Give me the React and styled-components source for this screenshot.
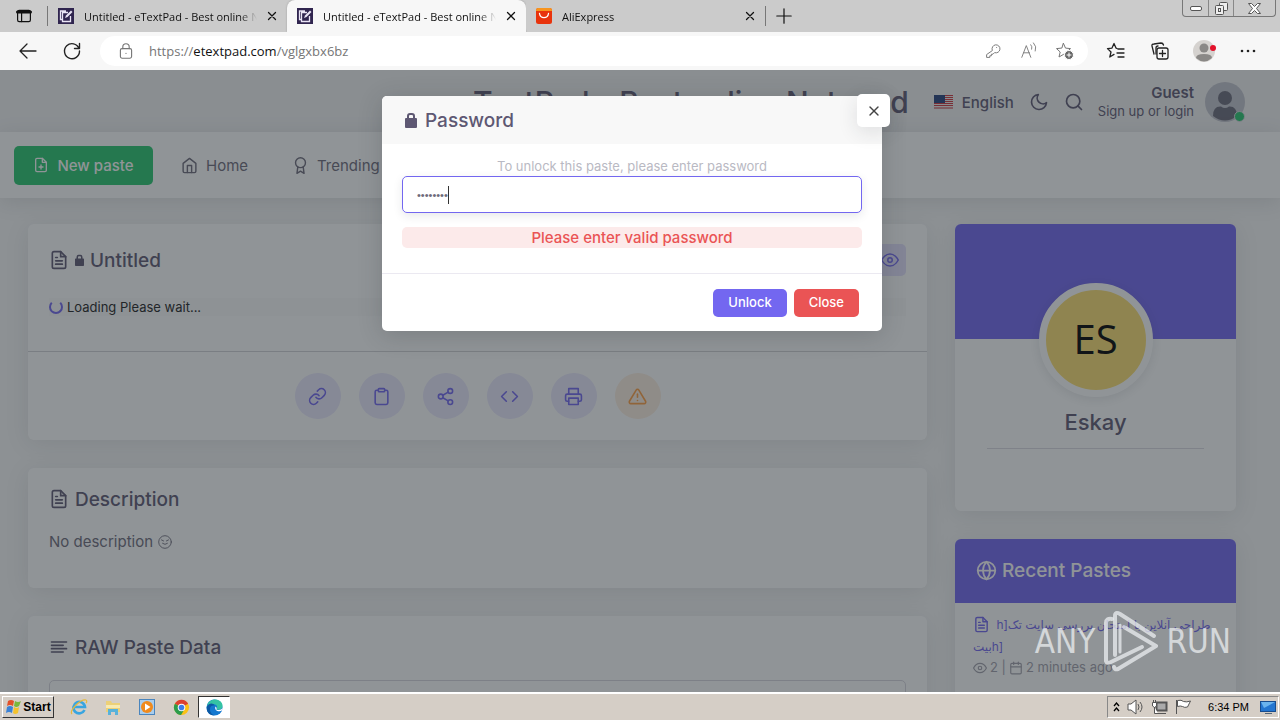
import React from "react";
import styled, { createGlobalStyle, css } from "styled-components";
import {
  FiAlertTriangle, FiAlignLeft, FiAward, FiCalendar, FiClipboard, FiCode, FiEye,
  FiFilePlus, FiFileText, FiGlobe, FiHome, FiLink, FiMoon, FiPrinter, FiSearch, FiShare2, FiX,
} from "react-icons/fi";

const ui = `"Open Sans", "Noto Sans", sans-serif`;
const brand = `Inter, "Noto Sans", "DejaVu Sans", sans-serif`;

const Global = createGlobalStyle`
  *, *::before, *::after { box-sizing: border-box; }
  body { margin: 0; font-family: ${brand}; color: #6e6b7b; }
  button, input, textarea { font: inherit; color: inherit; }
  button { border: 0; padding: 0; background: none; display: inline-flex; align-items: center; justify-content: center; }
  a { color: inherit; text-decoration: none; }
  h1, h2, h3, p { margin: 0; font-weight: 500; }
  svg { display: block; flex: none; }
`;

const Screen = styled.div`
  display: flex;
  flex-direction: column;
  height: 100vh;
  overflow: hidden;
`;

/* browser chrome */
const TabBar = styled.div`
  display: flex;
  flex: 0 0 32px;
  align-items: stretch;
  background: #cbcbcb;
  font: 11px ${ui};
  color: #111;
`;
const TabActions = styled.button`
  width: 47px;
`;
const Tab = styled.div`
  display: flex;
  flex: 0 1 239px;
  min-width: 0;
  align-items: center;
  gap: 10px;
  padding: 0 10px;
  border-radius: ${p => (p.$active ? "8px 8px 0 0" : "0 0 4px 4px")};
  background: ${p => (p.$active ? "#f7f7f7" : "#cbcbcb")};
  box-shadow: ${p => (p.$active ? "0 0 2px #999" : "none")};
`;
const TabLabel = styled.span`
  flex: 1 1 0;
  min-width: 0;
  overflow: hidden;
  white-space: nowrap;
  mask-image: linear-gradient(to right, #000 90%, transparent);
`;
const Separator = styled.i`
  align-self: center;
  width: 1px;
  height: 20px;
  background: #777;
`;
const NewTab = styled.button`
  width: 36px;
`;
const WindowButtons = styled.div`
  display: flex;
  align-self: flex-start;
  height: 17px;
  margin-left: auto;
  margin-right: 4px;
  border: 1px solid #777;
  border-top: 0;
  border-radius: 0 0 4px 4px;
`;
const WindowButton = styled.button`
  width: ${p => (p.$wide ? 42 : 25)}px;
  & + & { border-left: 1px solid #888; }
`;
const Toolbar = styled.div`
  display: flex;
  flex: 0 0 38px;
  align-items: center;
  padding: 0 22px 0 18px;
  background: #f7f7f7;
  color: #222;
`;
const ToolGroup = styled.div`
  display: flex;
  gap: 24px;
`;
const Tool = styled.button`
  width: 20px;
  height: 24px;
`;
const Address = styled.div`
  display: flex;
  flex: 1;
  align-items: center;
  height: 30px;
  margin: 0 18px;
  padding: 0 13px 0 18px;
  border-radius: 15px;
  background: #fff;
  color: #767676;
  font: 13px ${ui};
`;
const Url = styled.a`
  flex: 1;
  margin-left: 15px;
  b { font-weight: 400; color: #111; }
`;
const AddressTools = styled.div`
  display: flex;
  gap: 16px;
`;

/* page */
const Viewport = styled.main`
  position: relative;
  flex: 1;
  min-height: 0;
  overflow: hidden;
  background: #f8f8f8;
`;
const Header = styled.header`
  display: flex;
  align-items: center;
  justify-content: flex-end;
  height: 62px;
  padding: 2px 35px 0 0;
  background: #f2f2f3;
  color: #5e5873;
`;
const SiteTitle = styled.h1`
  margin-right: 25px;
  font-size: 30px;
  line-height: 36px;
  white-space: nowrap;
`;
const Language = styled.button`
  gap: 9px;
  font-size: 15px;
  font-weight: 500;
`;
const HeaderIcon = styled.button`
  margin-left: 15px;
`;
const Account = styled.a`
  display: flex;
  align-items: center;
  gap: 11px;
  margin-left: 14px;
  text-align: right;
  font-size: 13px;
  line-height: 18px;
  strong { display: block; font-size: 15px; font-weight: 600; }
`;
const Nav = styled.nav`
  position: relative;
  display: flex;
  align-items: center;
  height: 66px;
  padding: 0 14px;
  background: #fff;
  box-shadow: 0 4px 20px rgba(34, 41, 47, 0.12);
`;
const NewPaste = styled.button`
  gap: 8px;
  width: 139px;
  height: 39px;
  margin-right: 28px;
  border-radius: 5px;
  background: #28c76f;
  color: #fff;
  font-size: 15px;
  font-weight: 500;
`;
const NavLink = styled.a`
  display: flex;
  align-items: center;
  gap: 8px;
  margin-right: 44px;
  font-size: 15px;
`;
const Content = styled.div`
  display: flex;
  gap: 28px;
  padding: 26px 44px 0 28px;
`;
const Column = styled.div`
  display: flex;
  flex: ${p => (p.$side ? "0 0 281px" : "1")};
  flex-direction: column;
  gap: 28px;
  min-width: 0;
`;
const Card = styled.section`
  border-radius: 6px;
  background: #fff;
  box-shadow: 0 4px 24px rgba(34, 41, 47, 0.1);
`;
const CardBody = styled.div`
  padding: 20px 21px;
  min-height: ${p => p.$min || 0}px;
`;
const CardTitle = styled.h2`
  display: flex;
  align-items: center;
  gap: 6px;
  height: ${p => (p.$tall ? 32 : 22)}px;
  color: #5e5873;
  font-size: 19px;
`;
const ViewButton = styled.button`
  width: 32px;
  height: 32px;
  margin-left: auto;
  border-radius: 5px;
  background: #e4e1fc;
  color: #7367f0;
`;
const Loading = styled.p`
  display: flex;
  align-items: center;
  gap: 4px;
  height: 18px;
  margin-top: 22px;
  background: #fbfbfb;
  color: #222;
  font-size: 13px;
  font-weight: 400;
`;
const Spinner = styled.i`
  width: 14px;
  height: 14px;
  border: 2px solid #7367f0;
  border-top-color: transparent;
  border-radius: 50%;
`;
const Actions = styled.div`
  display: flex;
  justify-content: center;
  gap: 18px;
  padding: 21px 0;
  border-top: 1px solid #d2d2d6;
`;
const RoundAction = styled.button`
  width: 46px;
  height: 46px;
  border-radius: 50%;
  background: ${p => (p.$warn ? "#fdeee0" : "#eae8fd")};
  color: ${p => (p.$warn ? "#ff9f43" : "#7367f0")};
`;
const Note = styled.p`
  display: flex;
  align-items: center;
  gap: 5px;
  margin-top: 22px;
  font-size: 15px;
  font-weight: 400;
  line-height: 20px;
`;
const RawData = styled.textarea`
  display: block;
  width: 100%;
  height: 200px;
  margin-top: 22px;
  border: 1px solid #d8d6de;
  border-radius: 5px;
  background: transparent;
  resize: none;
`;
const Cover = styled.div`
  height: 115px;
  border-radius: 6px 6px 0 0;
  background: #7367f0;
`;
const Profile = styled(Card)`
  display: flex;
  flex-direction: column;
  min-height: 287px;
`;
const Initials = styled.div`
  display: grid;
  place-items: center;
  align-self: center;
  width: 114px;
  height: 114px;
  margin-top: -56px;
  padding-bottom: 4px;
  border: 7px solid #fff;
  border-radius: 50%;
  background: #fcdf71;
  box-shadow: 0 2px 12px rgba(34, 41, 47, 0.12);
  color: #000;
  font: 40px ${ui};
`;
const ProfileName = styled.h3`
  margin: 10px 32px 0;
  padding-bottom: 11px;
  border-bottom: 1px solid #dcdbe2;
  color: #5e5873;
  font-size: 22px;
  line-height: 30px;
  text-align: center;
`;
const RecentHeader = styled.h2`
  display: flex;
  align-items: center;
  gap: 5px;
  height: 64px;
  padding: 0 21px 2px;
  border-radius: 6px 6px 0 0;
  background: #7367f0;
  color: #fff;
  font-size: 19px;
`;
const RecentItem = styled.div`
  padding: 10px 18px 40px;
  line-height: 21px;
`;
const PasteLink = styled.a`
  color: #7367f0;
  font-size: 12px;
  svg { display: inline-block; margin-right: 3px; vertical-align: -4px; }
`;
const Meta = styled.p`
  display: flex;
  align-items: center;
  gap: 3px;
  color: #a3a1ac;
  font-size: 13px;
  font-weight: 400;
`;

/* password dialog */
const Backdrop = styled.div`
  position: absolute;
  inset: 0;
  display: flex;
  align-items: flex-start;
  justify-content: center;
  padding: 26px 16px 0 0;
  background: rgba(34, 41, 47, 0.5);
`;
const Dialog = styled.form`
  position: relative;
  width: 500px;
  border-radius: 5px;
  background: #fff;
  box-shadow: 0 4px 24px rgba(34, 41, 47, 0.2);
`;
const DialogTitle = styled.h2`
  display: flex;
  align-items: center;
  gap: 8px;
  height: 48px;
  padding: 0 23px;
  border-radius: 5px 5px 0 0;
  background: #f8f8f8;
  color: #5e5873;
  font-size: 19px;
`;
const DialogClose = styled.button`
  position: absolute;
  top: -2px;
  right: -8px;
  width: 33px;
  height: 33px;
  border-radius: 5px;
  background: #fff;
  box-shadow: 0 5px 20px rgba(34, 41, 47, 0.12);
  color: #444;
`;
const DialogBody = styled.div`
  padding: 12px 20px 25px;
  text-align: center;
`;
const Hint = styled.label`
  display: block;
  color: #b9b9c3;
  font-size: 13px;
  line-height: 20px;
`;
const Field = styled.div`
  display: flex;
  align-items: center;
  height: 37px;
  padding: 0 14px;
  border: 1px solid #7367f0;
  border-radius: 5px;
  box-shadow: 0 3px 10px rgba(34, 41, 47, 0.1);
`;
const Secret = styled.input`
  field-sizing: content;
  padding: 0;
  border: 0;
  outline: 0;
  background: none;
  font: 11px "Liberation Sans", sans-serif;
`;
const Caret = styled.i`
  width: 1px;
  height: 18px;
  background: #333;
`;
const ErrorText = styled.p`
  margin-top: 14px;
  border-radius: 5px;
  background: #fceaea;
  color: #ea5455;
  font-size: 15px;
  line-height: 21px;
`;
const DialogFooter = styled.div`
  display: flex;
  justify-content: flex-end;
  gap: 7px;
  padding: 15px 23px 14px;
  border-top: 1px solid #ebe9f1;
`;
const DialogButton = styled.button`
  height: 28px;
  padding: 0 15px 2px;
  border-radius: 5px;
  background: ${p => (p.$danger ? "#ea5455" : "#7367f0")};
  color: #fff;
  font-size: 13px;
  font-weight: 500;
`;
const Watermark = styled.div`
  position: absolute;
  right: 49px;
  bottom: 20px;
  display: flex;
  align-items: center;
  gap: 8px;
  color: rgba(235, 238, 240, 0.75);
  font: 33px "Liberation Sans Narrow", "DejaVu Sans Condensed", sans-serif;
`;

/* desktop taskbar */
const Taskbar = styled.footer`
  display: flex;
  flex: 0 0 28px;
  align-items: center;
  padding-left: 2px;
  border-top: 2px solid #fff;
  background: #d5cec6;
  color: #000;
  font: 11px "Liberation Sans", sans-serif;
`;
const bevel = css`
  border: 1px solid;
  border-color: ${p => (p.$pressed ? "#333 #fff #fff #333" : "#fff #333 #333 #fff")};
`;
const Start = styled.button`
  ${bevel}
  gap: 1px;
  width: 52px;
  height: 22px;
  margin-right: 8px;
  font-size: 12px;
  font-weight: 700;
`;
const TaskButton = styled.button`
  width: 34px;
  height: 22px;
  ${p => p.$pressed && css`${bevel} width: 32px; background: #fff;`}
`;
const Tray = styled.div`
  display: flex;
  align-items: center;
  gap: 7px;
  height: 22px;
  margin-left: auto;
  margin-right: 1px;
  padding: 0 2px 0 5px;
  border: 1px solid;
  border-color: #888 #fff #fff #888;
  time { margin: 0 4px 0 9px; }
`;

const Lines = ({ size = 20, w = 1, children, ...rest }) => (
  <svg width={size} height={size} viewBox="0 0 20 20" fill="none" stroke="currentColor" strokeWidth={w} strokeLinecap="round" strokeLinejoin="round" {...rest}>{children}</svg>
);
const Cross = () => <Lines size={10} w={2.5}><path d="M3 3l14 14M17 3L3 17" /></Lines>;
const Lock = ({ size }) => (
  <svg width={size * 0.75} height={size} viewBox="0 0 12 16" fill="currentColor"><path d="M2 6V4a3 3 0 0 1 3-3h2a3 3 0 0 1 3 3v2h1q1 0 1 1v8q0 1-1 1H1q-1 0-1-1V7q0-1 1-1zm2 0h4V4a1.200 1.200 0 0 0-1-1H5a1.200 1.200 0 0 0-1 1z" /></svg>
);
const PadIcon = () => (
  <svg width="16" height="16" viewBox="0 0 16 16" fill="none" stroke="#e9e4f5">
    <path d="M0 0h16v16H0z" fill="#30254f" stroke="none" />
    <path d="M8 3H2.500v8.500H5M10 4.500H4.500v9h8V8" strokeWidth="1.300" />
    <path d="M7 10l1-2.500 5-5 1.500 1.500-5 5z" fill="#e9e4f5" stroke="none" />
  </svg>
);
const AliIcon = () => (
  <svg width="16" height="16" viewBox="0 0 16 16"><rect width="16" height="16" rx="2.500" fill="#e8330c" /><path d="M0 3V2q0-2 2-2h12q2 0 2 2v1z" fill="#f7941e" /><path d="M3.500 5.500c.8 5.500 8.200 5.500 9 0" fill="none" stroke="#fff" strokeWidth="1.300" strokeLinecap="round" /></svg>
);
const Star = "M8.500 2.500l2 4.600 5 .5-3.800 3.400 1.200 5-4.400-2.600L4 16l1.200-5-3.700-3.400 5-.5z";

const Flag = () => (
  <svg width="19" height="14" viewBox="0 0 19 14">
    <path d="M0 0h19v14H0z" fill="#eee" />
    <path d="M0 .5h19M0 2.500h19M0 4.500h19M0 6.500h19M0 8.500h19M0 10.500h19M0 13h19" stroke="#d0343d" />
    <path d="M0 0h11v8H0z" fill="#26407c" />
  </svg>
);
const GuestAvatar = () => (
  <svg width="40" height="40" viewBox="0 0 40 40">
    <circle cx="20" cy="20" r="20" fill="#c3c4ce" />
    <circle cx="20" cy="16" r="7" fill="#6b6a7a" />
    <path d="M8 34q0-10 8-9.500 4 3 8 0Q32 24 32 34q-12 9-24 0z" fill="#6b6a7a" />
    <circle cx="34.500" cy="34.500" r="5" fill="#28c76f" stroke="#dcdce2" />
  </svg>
);
const Face = () => (
  <Lines size={14} w={1.3}><circle cx="10" cy="10" r="9" /><path d="M5 7l3 1.500M15 7l-3 1.500M6.500 12q3.500 3 7 0" /></Lines>
);
const PlayMark = () => (
  <svg width="55" height="62" viewBox="0 0 55 62" fill="none" stroke="currentColor" strokeWidth="4" strokeLinejoin="round" strokeLinecap="round">
    <path d="M12 45V6q0-5 5-2l34 22" />
    <path d="M21 17l32 19-38 23q-3 1-4-2" />
    <path d="M9 9Q3 8 3 13v38q1 3 5 1l31-15" />
    <path d="M17 15v27" strokeWidth="3" />
  </svg>
);

const WinFlag = () => (
  <svg width="17" height="16" viewBox="0 0 17 16">
    <path d="M3 2q3-2 6 0L8 7Q5 5 2 7z" fill="#e2512a" /><path d="M10 2q3 2 6 0l-2 5q-3 2-5 0z" fill="#79b83c" />
    <path d="M2 8q3-2 6 0l-1 6q-3-2-6 0z" fill="#3b82d6" /><path d="M9 8q3 2 5 0l-1 6q-3 2-5 0z" fill="#f4c22c" />
  </svg>
);
const IeIcon = () => (
  <svg width="18" height="18" viewBox="0 0 18 18" fill="none"><path d="M14.500 12A5.800 5.800 0 1 1 15 9H4" stroke="#38a5e0" strokeWidth="2.600" /><path d="M2 16c-3-3 8-15 14-14 1 0 1 2 0 3" stroke="#e6b93a" strokeWidth="1.200" /></svg>
);
const FolderIcon = () => (
  <svg width="18" height="18" viewBox="0 0 18 18"><path d="M2 3h5l1 2h8v9H2z" fill="#ecd078" /><path d="M2 7h14v3H2z" fill="#f8eab0" /><path d="M4 17v-6h10v6h-3v-3H7v3z" fill="#58b2da" /></svg>
);
const MediaIcon = () => (
  <svg width="17" height="17" viewBox="0 0 17 17"><rect x=".5" y=".5" width="15" height="15" fill="#a9cdec" stroke="#4a85bd" /><circle cx="8" cy="8" r="6" fill="#f08a1c" /><path d="M6 4.500l5.500 3.500L6 11.500z" fill="#fff" /></svg>
);
const ChromeIcon = () => (
  <svg width="17" height="17" viewBox="0 0 18 18"><circle cx="9" cy="9" r="8" fill="#fbc116" /><path d="M9 9L2 5a8 8 0 0 1 14 0z" fill="#dd4131" /><path d="M9 9L2 5a8 8 0 0 0 6.500 12L12 11z" fill="#2c9c4b" /><circle cx="9" cy="9" r="4" fill="#fff" /><circle cx="9" cy="9" r="3" fill="#3f7de8" /></svg>
);
const EdgeIcon = () => (
  <svg width="17" height="17" viewBox="0 0 18 18"><circle cx="9" cy="9" r="8.500" fill="#1478cf" /><path d="M1 8C2 2 7 .5 10 .6c5 .2 8 4 7.500 7.400-.5 3-4 4-6.500 3 1.500-2 1-5-2.500-5.500C4 5 1.500 7 1 8z" fill="#35c3a4" /><path d="M10 8c-1 3 1 5 4 5q2 0 3-1l.5-3c-1 3-5 3-6.500 2 .6-1 .4-2-1-3z" fill="#fff" /><path d="M1 8c2-4 7-4 8-1-4-1-6 3-4 7q1 3 4 3.500C3 17.500 0 13 1 8z" fill="#0c59a4" /></svg>
);

const tabs = [
  { title: "Untitled - eTextPad - Best online Notepad", icon: PadIcon },
  { title: "Untitled - eTextPad - Best online Notepad", icon: PadIcon, active: true },
  { title: "AliExpress", icon: AliIcon },
];
const actions = [
  ["Copy link", FiLink], ["Copy text", FiClipboard], ["Share", FiShare2],
  ["Embed", FiCode], ["Print", FiPrinter], ["Report", FiAlertTriangle],
];
const launchers = [["Internet Explorer", IeIcon], ["Explorer", FolderIcon], ["Media Player", MediaIcon], ["Chrome", ChromeIcon], ["Edge", EdgeIcon]];

function Browser() {
  return (
    <>
      <TabBar>
        <TabActions aria-label="Tab actions">
          <Lines size={16} w={1.5}><rect x="2" y="3" width="16" height="14" rx="2" /><path d="M2 5h16" strokeWidth="4" /><path d="M7 6v11" /></Lines>
        </TabActions>
        <Separator />
        {tabs.map(({ title, icon: Icon, active }, i) => (
          <Tab key={i} $active={active}>
            <Icon />
            <TabLabel>{title}</TabLabel>
            <button aria-label="Close tab"><Cross /></button>
          </Tab>
        ))}
        <Separator />
        <NewTab aria-label="New tab"><Lines size={16} w={1.5}><path d="M10 1v18M1 10h18" /></Lines></NewTab>
        <WindowButtons>
          <WindowButton aria-label="Minimize"><svg width="12" height="5"><rect x=".5" y=".5" width="11" height="4" rx="1.500" fill="#fff" stroke="#555" /></svg></WindowButton>
          <WindowButton aria-label="Restore"><svg width="13" height="13" fill="#eee" stroke="#555"><rect x="4.500" y=".5" width="8" height="8" rx="1" /><rect x=".5" y="3.500" width="8" height="9" rx="1" /><rect x="3.500" y="6.500" width="2" height="3" /></svg></WindowButton>
          <WindowButton $wide aria-label="Close window"><svg width="13" height="11" viewBox="0 0 13 11"><path d="M.5.5h3l3 3 3-3h3L8.500 5.500l4 5h-3l-3-3-3 3h-3l4-5z" fill="#fff" stroke="#555" /></svg></WindowButton>
        </WindowButtons>
      </TabBar>
      <Toolbar>
        <ToolGroup>
          <Tool aria-label="Back"><Lines w={1.3}><path d="M18 10H2M9 3L2 10l7 7" /></Lines></Tool>
          <Tool aria-label="Reload"><Lines w={1.4}><path d="M17 7.500A7.500 7.500 0 1 0 17.500 10M17.500 2.500v5h-5" /></Lines></Tool>
        </ToolGroup>
        <Address>
          <Lines size={16} w={1.4}><rect x="3" y="7" width="14" height="12" rx="2" /><path d="M6 7V5a4 4 0 0 1 8 0v2M10 13v.2" /></Lines>
          <Url href="#url">https://<b>etextpad.com</b>/vglgxbx6bz</Url>
          <AddressTools>
            <Tool aria-label="Saved passwords"><Lines size={16} w={1.2}><path d="M9 9a5 5 0 1 1 3 3l-2 2H8v2H6v2H2v-3zM14.500 5.500v.1" /></Lines></Tool>
            <Tool aria-label="Read aloud"><Lines size={18}><path d="M2 17L7 4l5 13M4 12h6.500M12 3q2 2 1 5M15 1q4 4 2 9" /></Lines></Tool>
            <Tool aria-label="Add to favorites"><Lines size={20}><path d={Star} /><circle cx="14" cy="14" r="4.500" fill="#666" stroke="#fff" /><path d="M14 12v4M12 14h4" stroke="#fff" /></Lines></Tool>
          </AddressTools>
        </Address>
        <ToolGroup>
          <Tool aria-label="Favorites"><Lines w={1.3}><path d="M11 7.500l-1-.4-2-4.600-2 4.600-4.500.5 3.500 3.400-1.200 5L8 13.400M12 8h6M11 12h7M12 16h6" /></Lines></Tool>
          <Tool aria-label="Collections"><Lines w={1.3}><path d="M4 13l-2-8q-.5-2 2-2l7-1q2 0 2.500 2" /><path d="M6 13V7q0-2 2-2" /><rect x="7" y="7" width="11" height="11" rx="2" /><path d="M12.500 9.500v6M9.500 12.500h6" /></Lines></Tool>
          <Tool aria-label="Profile"><svg width="24" height="24" viewBox="0 0 24 24"><circle cx="12" cy="12" r="11" fill="#d5d2cf" /><circle cx="12" cy="9" r="4.500" fill="#8a8886" /><path d="M4 19q0-4 8-4t8 4q-8 7-16 0z" fill="#8a8886" /><circle cx="21" cy="9" r="3" fill="#e3122b" /></svg></Tool>
          <Tool aria-label="Settings"><svg width="16" height="4" fill="currentColor"><circle cx="2" cy="2" r="1.300" /><circle cx="8" cy="2" r="1.300" /><circle cx="14" cy="2" r="1.300" /></svg></Tool>
        </ToolGroup>
      </Toolbar>
    </>
  );
}

function PasswordDialog() {
  return (
    <Backdrop>
      <Dialog role="dialog" aria-label="Password" onSubmit={e => e.preventDefault()}>
        <DialogTitle><Lock size={16} />Password</DialogTitle>
        <DialogClose type="button" aria-label="Dismiss"><FiX size={16} /></DialogClose>
        <DialogBody>
          <Hint htmlFor="secret">To unlock this paste, please enter password</Hint>
          <Field>
            <Secret id="secret" type="password" defaultValue="password" />
            <Caret />
          </Field>
          <ErrorText role="alert">Please enter valid password</ErrorText>
        </DialogBody>
        <DialogFooter>
          <DialogButton>Unlock</DialogButton>
          <DialogButton type="button" $danger>Close</DialogButton>
        </DialogFooter>
      </Dialog>
    </Backdrop>
  );
}

export default function App() {
  return (
    <Screen>
      <Global />
      <Browser />
      <Viewport>
        <Header>
          <SiteTitle>eTextPad - Best online Notepad</SiteTitle>
          <Language><Flag />English</Language>
          <HeaderIcon aria-label="Dark mode"><FiMoon size={20} /></HeaderIcon>
          <HeaderIcon aria-label="Search"><FiSearch size={20} /></HeaderIcon>
          <Account href="#login"><span><strong>Guest</strong>Sign up or login</span><GuestAvatar /></Account>
        </Header>
        <Nav>
          <NewPaste><FiFilePlus size={16} />New paste</NewPaste>
          <NavLink href="#home"><FiHome size={17} />Home</NavLink>
          <NavLink href="#trending"><FiAward size={17} />Trending</NavLink>
        </Nav>
        <Content>
          <Column>
            <Card>
              <CardBody $min={127}>
                <CardTitle $tall><FiFileText size={20} /><Lock size={12} />Untitled<ViewButton aria-label="View"><FiEye size={18} /></ViewButton></CardTitle>
                <Loading><Spinner />Loading Please wait...</Loading>
              </CardBody>
              <Actions>
                {actions.map(([name, Icon]) => (
                  <RoundAction key={name} aria-label={name} $warn={name === "Report"}><Icon size={19} /></RoundAction>
                ))}
              </Actions>
            </Card>
            <Card>
              <CardBody $min={120}>
                <CardTitle><FiFileText size={20} />Description</CardTitle>
                <Note>No description <Face /></Note>
              </CardBody>
            </Card>
            <Card>
              <CardBody>
                <CardTitle><FiAlignLeft size={20} />RAW Paste Data</CardTitle>
                <RawData aria-label="Raw paste data" />
              </CardBody>
            </Card>
          </Column>
          <Column $side>
            <Profile>
              <Cover />
              <Initials>ES</Initials>
              <ProfileName>Eskay</ProfileName>
            </Profile>
            <Card>
              <RecentHeader><FiGlobe size={21} />Recent Pastes</RecentHeader>
              <RecentItem>
                <PasteLink href="#paste"><FiFileText size={17} /> h]طراحی آنلاین با امتحان بررسی سایت تک<br />بیتh]</PasteLink>
                <Meta><FiEye size={14} />2 | <FiCalendar size={14} />2 minutes ago</Meta>
              </RecentItem>
            </Card>
          </Column>
        </Content>
        <PasswordDialog />
        <Watermark>ANY<PlayMark />RUN</Watermark>
      </Viewport>
      <Taskbar>
        <Start><WinFlag />Start</Start>
        {launchers.map(([name, Icon]) => <TaskButton key={name} aria-label={name} $pressed={name === "Edge"}><Icon /></TaskButton>)}
        <Tray>
          <svg width="7" height="10" fill="none" stroke="#000" strokeWidth="1.300"><path d="M1 4l2.500-3L6 4M1 9l2.500-3L6 9" /></svg>
          <svg width="17" height="16" fill="#fff" stroke="#555"><path d="M1 5h3l5-4v14l-5-4H1z" /><path d="M11 5q2 3 0 6M13 3q4 5 0 10" fill="none" /></svg>
          <svg width="17" height="16" fill="#fff" stroke="#555"><rect x="5.500" y="3.500" width="10" height="8" fill="#aaa" strokeWidth="2" /><path d="M7 14.500h8M3.500 8v6.500H7M1.500 3.500h4V7l-2 1.500-2-1.500zM2.500 1v2M4.500 1v2" /></svg>
          <svg width="17" height="16" fill="#fff" stroke="#555"><path d="M1.500 1v14M2.500 1.500q4-1 6 1 3 1 7-.5l-3 6q-3 1-5-.5-2-1-5 0z" /></svg>
          <time>6:34 PM</time>
          <svg width="16" height="15"><rect x=".5" y="1.500" width="15" height="10" fill="#2476d0" stroke="#174c8e" /><path d="M1 2h14L4 8z" fill="#6bb4ee" /><path d="M5 13h7v1H5z" fill="#567" /></svg>
        </Tray>
      </Taskbar>
    </Screen>
  );
}
